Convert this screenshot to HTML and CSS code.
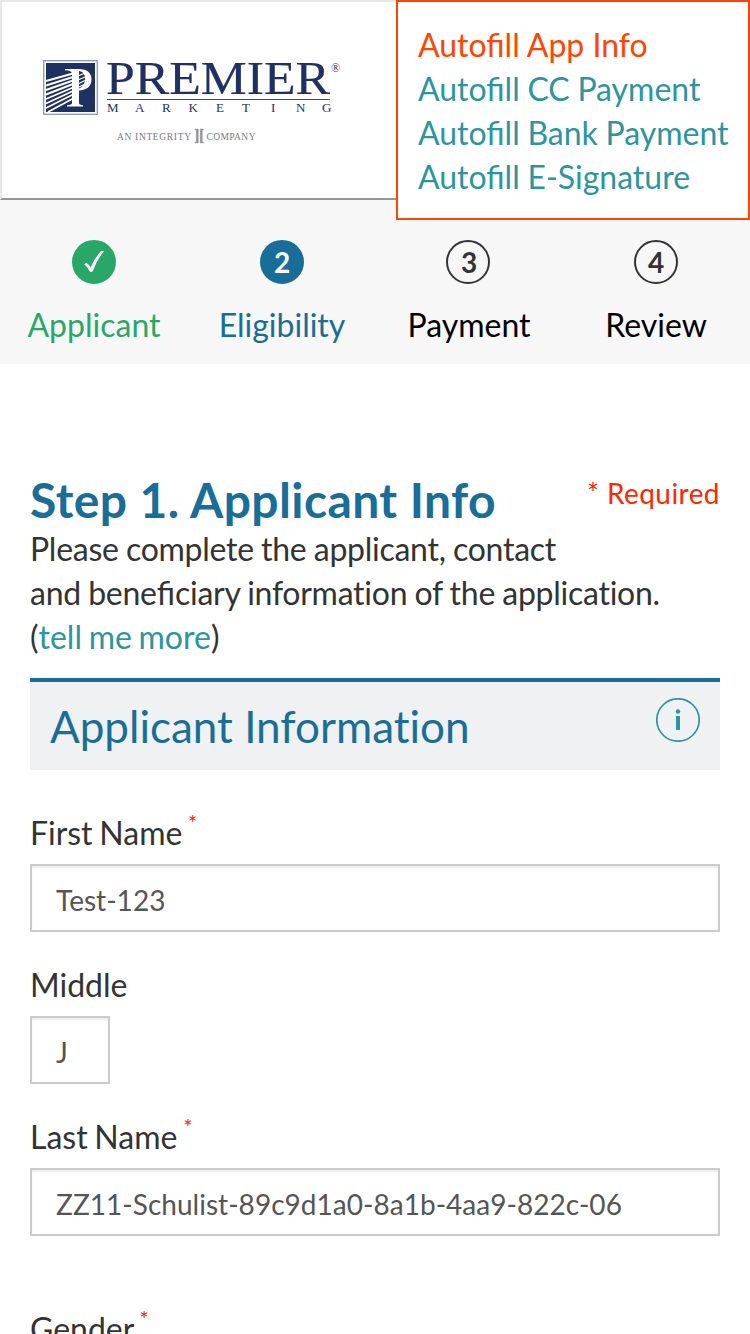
FILE: index.html
```
<!DOCTYPE html>
<html lang="en">
<head>
<meta charset="utf-8">
<title>Step 1. Applicant Info</title>
<link rel="stylesheet" href="styles.css">
</head>
<body>
<header class="header">
  <svg class="logo" width="310" height="100" viewBox="36 52 310 100" role="img" aria-label="Premier Marketing">
    <rect x="43.700" y="60.700" width="53.600" height="53.600" fill="#fff" stroke="#8d96b3" stroke-width="1.300"/>
    <rect x="46" y="63" width="49" height="49" fill="#1f3063"/>
    <g class="logo-rays">
      <path d="M46 81L73 73.500M46 85.500L73 77M46 90L73 80.500M46 94.500L73 84M46 99L73 87.500M46 103.500L73 91M46 108L73 94.500M48 112L73 98.500"/>
    </g>
    <path class="logo-mark" d="M65 69H79C87 69 91.500 73 91.500 79C91.500 86.500 87 90 79 90.500V103Q79 105 83 105.300V106.500H67V105.300Q72 105 72 103V74Q72 70.500 65 70.200Z"/>
    <path d="M79 71Q85 71.500 85 79Q85 86.500 79 88.500Z" fill="#1f3063"/>
    <path class="logo-mark-ray" d="M79 75.500L84 73.500M79 79.500L85 77M79 83.500L85 80.500M79 87L84 84.500"/>
    <text class="brand" x="106" y="94" textLength="224" lengthAdjust="spacingAndGlyphs">PREMIER</text>
    <text class="reg" x="331" y="71.500">®</text>
    <path d="M107 99.500H330" stroke="#3c4a78" stroke-width="1"/>
    <text class="brand-sub" x="107 135 162 188.500 216 242 271 296 322" y="112">MARKETING</text>
    <text class="tagline" x="117" y="139.500" textLength="74" lengthAdjust="spacing">AN INTEGRITY</text>
    <path class="tag-mark" d="M195 129H198.300V143H195V142H196.200V130H195ZM203.500 129H200.200V143H203.500V142H202.300V130H203.500Z"/>
    <text class="tagline" x="206.500" y="139.500" textLength="49" lengthAdjust="spacing">COMPANY</text>
  </svg>
  <nav class="autofill">
    <a class="autofill-link active">Autofill App Info</a>
    <a class="autofill-link">Autofill CC Payment</a>
    <a class="autofill-link">Autofill Bank Payment</a>
    <a class="autofill-link">Autofill E-Signature</a>
  </nav>
</header>
<ol class="steps">
  <li class="step done">
    <span class="dot"><svg width="44" height="44" viewBox="0 0 44 44"><path d="M12.300 24.300L14.300 22.800Q17 24.500 18.700 27.300Q22.500 18 29 11.300L32 11.200Q24.500 20 20.700 31.500L18 32Q16 27.500 12.300 24.300Z" fill="#fff"/></svg></span>
    <span class="step-name">Applicant</span>
  </li>
  <li class="step current"><span class="dot">2</span><span class="step-name">Eligibility</span></li>
  <li class="step"><span class="dot three">3</span><span class="step-name">Payment</span></li>
  <li class="step"><span class="dot">4</span><span class="step-name">Review</span></li>
</ol>
<main class="main">
  <div class="title-row">
    <h1 class="title">Step 1. Applicant Info</h1>
    <span class="required">* Required</span>
  </div>
  <p class="intro"><span class="tight">Please complete the applicant, contact</span><br><span class="tight">and bene</span>fi<span class="tight">ciary information of the application.</span><br>(<a class="more">tell me more</a>)</p>
  <section class="section-head">
    <h2 class="section-title">Applicant Information</h2>
    <span class="info"><svg width="44" height="44" viewBox="0 0 44 44"><circle cx="22" cy="22" r="21.200" fill="none" stroke="#2b95a0" stroke-width="1.700"/><circle cx="22" cy="13.500" r="2.200" fill="#2b95a0"/><path d="M20 18h4v14h-4z" fill="#2b95a0"/></svg></span>
  </section>
  <form class="form">
    <div class="field"><label class="label">First Name <span class="star">*</span></label><input class="input" type="text" value="Test-123"></div>
    <div class="field"><label class="label">Middle</label><input class="input initial" type="text" value="J"></div>
    <div class="field last"><label class="label">Last Name <span class="star">*</span></label><input class="input" type="text" value="ZZ11-Schulist-89c9d1a0-8a1b-4aa9-822c-06"></div>
    <div class="field"><label class="label">Gender <span class="star">*</span></label></div>
  </form>
</main>
</body>
</html>
```
FILE: styles.css
```
* { box-sizing: border-box; }
html, body { height: 1334px; overflow: hidden; }
body { margin: 0; background: #fff; color: #333; font: 32px/44px Lato, sans-serif; }

.header { height: 200px; display: flex; justify-content: space-between; align-items: flex-start; border: 2px solid #e8e8e8; border-right: 0; border-bottom-color: #969696; }
.logo { display: block; margin: 50px 0 0 34px; }
.logo-rays { stroke: #fff; stroke-width: 1.9; fill: none; }
.logo-mark { fill: #fff; }
.logo-mark-ray { stroke: #fff; stroke-width: 1.2; fill: none; }
.brand { font: 47px "Liberation Serif", serif; fill: #1f3063; stroke: #1f3063; stroke-width: .2; }
.reg { font: 12px "Liberation Serif", serif; fill: #1f3063; }
.brand-sub { font: 13px "Liberation Serif", serif; fill: #1f3063; }
.tagline { font: 9.5px "Liberation Serif", serif; fill: #777b83; }
.tag-mark { fill: #92959b; stroke: #92959b; stroke-width: .4; }

.autofill { position: relative; z-index: 1; width: 354px; height: 220px; margin-top: -2px; padding: 21px 20px 19px; display: flex; flex-direction: column; background: #fff; border: 2px solid #ff4500; white-space: nowrap; word-spacing: -.5px; }
.autofill-link { color: #2b95a0; }
.autofill-link.active { color: #ff4500; word-spacing: 0; }

.steps { height: 164px; margin: 0; padding: 40px 0 0; list-style: none; display: grid; grid-template-columns: 188px 188px 186px 188px; background: #f7f7f7; }
.step { display: flex; flex-direction: column; align-items: center; gap: 19px; color: #000; }
.dot { width: 44px; height: 44px; display: flex; align-items: center; justify-content: center; border: 2px solid #333; border-radius: 50%; color: #333; font-size: 28px; font-weight: 700; }
.dot svg { flex: none; }
.three { margin-right: 2px; padding-left: 2px; }
.done { color: #28a768; }
.done .dot { background: #28a768; border-color: #28a768; }
.current { color: #186e98; }
.current .dot { background: #186e98; border-color: #186e98; color: #fff; }

.main { padding: 110px 30px 0; }
.title-row { height: 53px; display: flex; justify-content: space-between; align-items: flex-start; }
.title { margin: 0; font-size: 48px; line-height: 52px; font-weight: 700; letter-spacing: .4px; color: #186e98; }
.required { font-size: 28px; line-height: 39px; letter-spacing: .45px; color: #ff2600; }
.intro { margin: 0 0 19px; }
.tight { letter-spacing: -.26px; word-spacing: -.7px; }
.more { color: #2b95a0; word-spacing: -1.5px; }
.section-head { height: 92px; padding: 16px 20px 0; display: flex; justify-content: space-between; align-items: flex-start; background: #f0f1f3; border-top: 4px solid #186e98; }
.section-title { margin: 0; font-size: 44px; line-height: 56px; font-weight: 400; font-variant-ligatures: none; color: #186e98; }
.info, .info svg { display: block; }
.form { padding-top: 41px; }
.field { display: flex; flex-direction: column; gap: 9px; margin-bottom: 31px; }
.field.last { margin-bottom: 71px; }
.label { height: 44px; word-spacing: -1.5px; }
.star { margin-left: -1px; font-size: 22px; line-height: 1; vertical-align: 14px; color: #ff2600; }
.input { width: 100%; height: 68px; padding: 3px 24px 0; border: 2px solid #ccc; border-radius: 0; background: #fff; box-shadow: inset 0 2px 2px rgba(0,0,0,.075); color: #555; font: 28px Lato, sans-serif; letter-spacing: .03px; outline: 0; }
.input.initial { width: 80px; }
```
